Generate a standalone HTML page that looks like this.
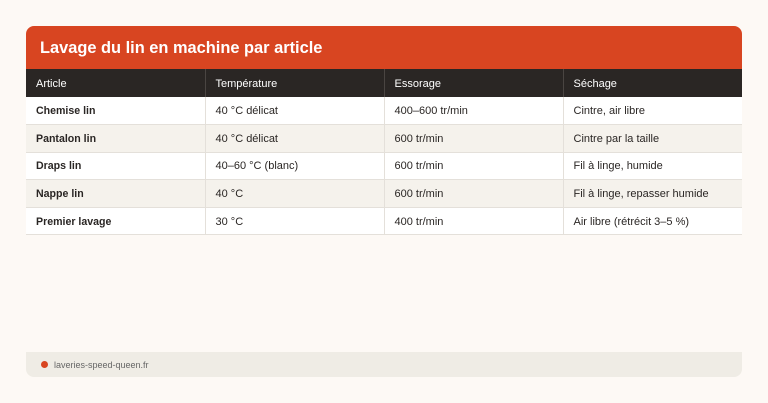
<!DOCTYPE html><html><head><style>
body{margin:0;width:768px;height:403px;background:#fdf9f5;font-family:"Liberation Sans",sans-serif;position:relative;overflow:hidden}
.t{position:absolute;left:26px;top:26px;width:716px;height:43px;background:#d84521;border-radius:8px 8px 0 0;color:#fff;font-size:16.4px;font-weight:bold;line-height:44px;padding-left:14px;box-sizing:border-box}
table{position:absolute;left:26px;top:69px;width:716px;border-collapse:collapse;font-size:11px;color:#2a2624}
td,th{width:179px;padding:1px 0 0 10px;text-align:left;vertical-align:middle;line-height:14px;box-sizing:border-box;border-right:1px solid #e4e0da;border-bottom:1px solid #e4e0da}
th{background:#2a2624;color:#fff;font-weight:normal;height:28px;border-right:1px solid #4a4542;border-bottom:none}
td{height:27.6px}
tr:nth-child(odd) td{background:#f5f2ec}
tr:nth-child(even) td{background:#fff}
td:first-child{font-weight:bold;font-size:10.6px}
td:last-child,th:last-child{border-right:none}
.f{position:absolute;left:26px;top:352px;width:716px;height:25px;background:#efece5;border-radius:0 0 8px 8px;font-size:9px;color:#666;line-height:26px;padding-left:28px;box-sizing:border-box}
.f:before{content:"";position:absolute;left:15px;top:9px;width:7px;height:7px;border-radius:50%;background:#d84521}
</style></head><body>
<div class="t">Lavage du lin en machine par article</div>
<table>
<tr><th>Article</th><th>Température</th><th>Essorage</th><th>Séchage</th></tr>
<tr><td>Chemise lin</td><td>40 °C délicat</td><td>400–600 tr/min</td><td>Cintre, air libre</td></tr>
<tr><td>Pantalon lin</td><td>40 °C délicat</td><td>600 tr/min</td><td>Cintre par la taille</td></tr>
<tr><td>Draps lin</td><td>40–60 °C (blanc)</td><td>600 tr/min</td><td>Fil à linge, humide</td></tr>
<tr><td>Nappe lin</td><td>40 °C</td><td>600 tr/min</td><td>Fil à linge, repasser humide</td></tr>
<tr><td>Premier lavage</td><td>30 °C</td><td>400 tr/min</td><td>Air libre (rétrécit 3–5 %)</td></tr>
</table>
<div class="f">laveries-speed-queen.fr</div>
</body></html>
